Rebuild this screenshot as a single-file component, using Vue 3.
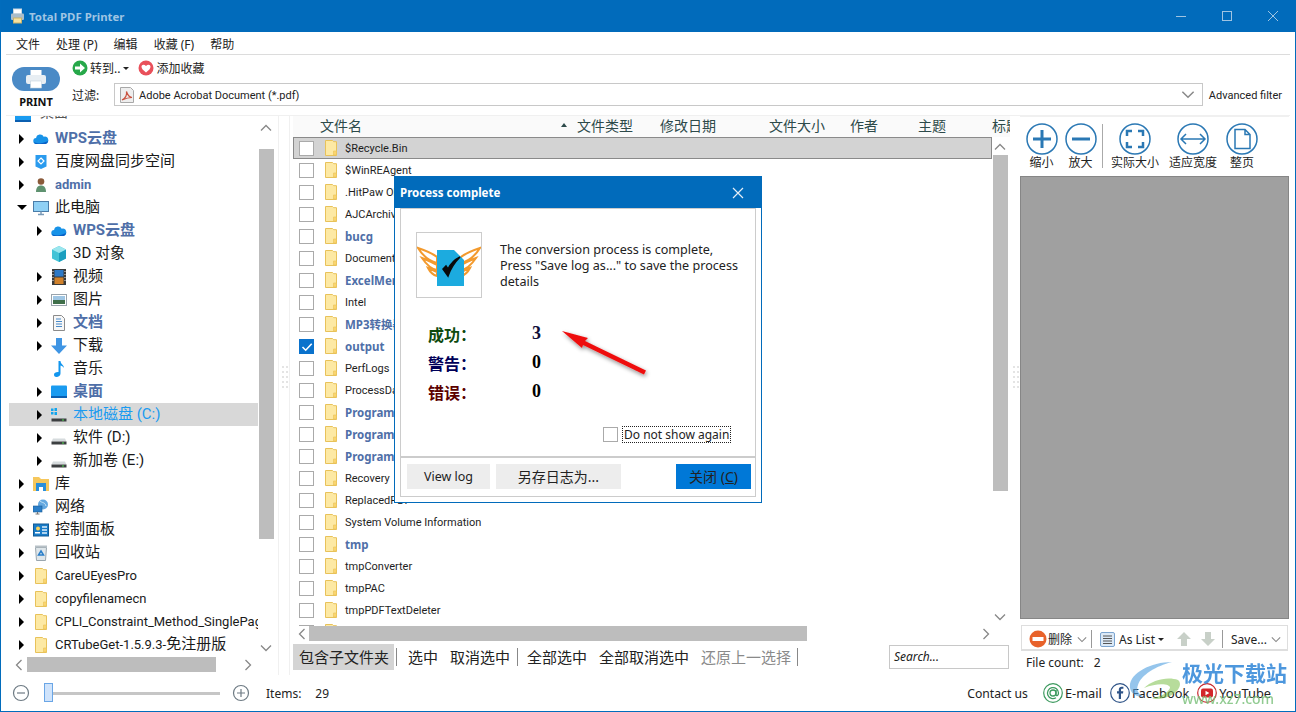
<script setup>
const menus = ['文件', '处理 (P)', '编辑', '收藏 (F)', '帮助']

const treeRows = [
  { text: 'WPS云盘', icon: 'cloud', lvl: 0, arrow: 'r', cls: 'special' },
  { text: '百度网盘同步空间', icon: 'baidu', lvl: 0, arrow: 'r' },
  { text: 'admin', icon: 'user', lvl: 0, arrow: 'r', cls: 'special' },
  { text: '此电脑', icon: 'pc', lvl: 0, arrow: 'd' },
  { text: 'WPS云盘', icon: 'cloud', lvl: 1, arrow: 'r', cls: 'special' },
  { text: '3D 对象', icon: 'cube', lvl: 1 },
  { text: '视频', icon: 'film', lvl: 1, arrow: 'r' },
  { text: '图片', icon: 'pic', lvl: 1, arrow: 'r' },
  { text: '文档', icon: 'doc', lvl: 1, arrow: 'r', cls: 'special' },
  { text: '下载', icon: 'down', lvl: 1, arrow: 'r' },
  { text: '音乐', icon: 'note', lvl: 1 },
  { text: '桌面', icon: 'desk', lvl: 1, arrow: 'r', cls: 'special' },
  { text: '本地磁盘 (C:)', icon: 'sysdrive', lvl: 1, arrow: 'r', cls: 'active' },
  { text: '软件 (D:)', icon: 'drive', lvl: 1, arrow: 'r' },
  { text: '新加卷 (E:)', icon: 'drive', lvl: 1, arrow: 'r' },
  { text: '库', icon: 'lib', lvl: 0, arrow: 'r' },
  { text: '网络', icon: 'net', lvl: 0, arrow: 'r' },
  { text: '控制面板', icon: 'panel', lvl: 0, arrow: 'r' },
  { text: '回收站', icon: 'bin', lvl: 0, arrow: 'r' },
  { text: 'CareUEyesPro', icon: 'folder', lvl: 0, arrow: 'r' },
  { text: 'copyfilenamecn', icon: 'folder', lvl: 0, arrow: 'r' },
  { text: 'CPLI_Constraint_Method_SinglePage', icon: 'folder', lvl: 0, arrow: 'r' },
  { text: 'CRTubeGet-1.5.9.3-', tail: '免注册版', icon: 'folder', lvl: 0, arrow: 'r' },
]

const isCjk = (text) => /[^\x00-\x7f]/.test(text)

const columns = [
  { text: '文件类型', width: 83 },
  { text: '修改日期', width: 109 },
  { text: '文件大小', width: 81 },
  { text: '作者', width: 68 },
  { text: '主题', width: 74 },
  { text: '标题', width: 40 },
]

const files = [
  { name: '$Recycle.Bin', cur: true },
  { name: '$WinREAgent' },
  { name: '.HitPaw Object' },
  { name: 'AJCArchive' },
  { name: 'bucg', bold: true },
  { name: 'Documents' },
  { name: 'ExcelMerge', bold: true },
  { name: 'Intel' },
  { name: 'MP3转换器', bold: true },
  { name: 'output', bold: true, checked: true },
  { name: 'PerfLogs' },
  { name: 'ProcessData' },
  { name: 'Program Files', bold: true },
  { name: 'Program Files (x86)', bold: true },
  { name: 'ProgramData', bold: true },
  { name: 'Recovery' },
  { name: 'ReplacedPDF' },
  { name: 'System Volume Information' },
  { name: 'tmp', bold: true },
  { name: 'tmpConverter' },
  { name: 'tmpPAC' },
  { name: 'tmpPDFTextDeleter' },
  { name: 'Users' },
]

const stats = [
  { label: '成功：', value: 3, cls: 'ok' },
  { label: '警告：', value: 0, cls: 'warn' },
  { label: '错误：', value: 0, cls: 'err' },
]
</script>

<template>
  <div class="win">
    <svg class="sprite" width="0" height="0">
      <symbol id="i-folder" viewBox="0 0 16 16">
        <path d="M2.500 .5h7l1.200 1.200h2.800v13.800h-11z" fill="#fde9a4" stroke="#e8c25a" />
        <path d="M10.500 15V11h3v4z" fill="#fbd56e" stroke="#e8c25a" stroke-width=".6" />
      </symbol>
      <symbol id="i-cloud" viewBox="0 0 16 16">
        <path d="M3.500 13a3 3 0 0 1-.4-6 4 4 0 0 1 7.600-1.200A3.600 3.600 0 0 1 12.500 13z" fill="#1893e8" />
        <path d="M1 11c3 2 8 2 14-1-.5 2-1.500 3-3 3H3.500C2.500 13 1.500 12.500 1 11z" fill="#0a5fc4" />
      </symbol>
      <symbol id="i-baidu" viewBox="0 0 16 16">
        <path d="M2.500 1h11v11.500L8 15l-5.500-2.500z" fill="#2a9bee" />
        <path d="M8 4l3 3-3 3-3-3z" fill="none" stroke="#fff" stroke-width="1.200" />
      </symbol>
      <symbol id="i-user" viewBox="0 0 16 16">
        <circle cx="8" cy="4.500" r="3.300" fill="#8a5a3a" />
        <path d="M3 15c0-4.500 2-6.500 5-6.500s5 2 5 6.500z" fill="#5f9270" />
      </symbol>
      <symbol id="i-pc" viewBox="0 0 16 16">
        <rect x=".5" y="1.500" width="15" height="10" fill="#8fd0f5" stroke="#4a7ca8" />
        <path d="M5 14.500h6M8 11.500v3" stroke="#7a9ab8" stroke-width="1.500" />
      </symbol>
      <symbol id="i-cube" viewBox="0 0 16 16">
        <path d="M8 0l7 3.500v9L8 16l-7-3.500v-9z" fill="#43c3d6" />
        <path d="M8 7l7-3.500v9L8 16z" fill="#1b9fbf" />
        <path d="M8 0l7 3.500L8 7 1 3.500z" fill="#9be6ee" />
      </symbol>
      <symbol id="i-film" viewBox="0 0 16 16">
        <rect x="1" y="0" width="14" height="16" fill="#3a3a3a" />
        <rect x="3.500" y="1" width="9" height="6.500" fill="#2d79c7" />
        <rect x="3.500" y="8.500" width="9" height="6.500" fill="#d0812b" />
        <path d="M2 2v1M2 5v1M2 8v1M2 11v1M14 2v1M14 5v1M14 8v1M14 11v1" stroke="#eee" />
      </symbol>
      <symbol id="i-pic" viewBox="0 0 16 16">
        <rect x=".5" y="2.500" width="15" height="11" fill="#fff" stroke="#99a4ad" />
        <rect x="2" y="4" width="12" height="4" fill="#9fc6e4" />
        <rect x="2" y="8" width="12" height="4" fill="#3f6f4a" />
      </symbol>
      <symbol id="i-doc" viewBox="0 0 16 16">
        <path d="M2.500 .5h8l3 3v12h-11z" fill="#f7f7f7" stroke="#8b8b8b" />
        <path d="M5 4h5M5 6.500h6M5 9h6M5 11.500h6" stroke="#4a8bc9" />
      </symbol>
      <symbol id="i-down" viewBox="0 0 16 16">
        <path d="M5 0h6v7.500h5L8 16 0 7.500h5z" fill="#3f95e4" />
      </symbol>
      <symbol id="i-note" viewBox="0 0 16 16">
        <path d="M7.500 0h2c0 3 3.500 4 3.500 7-1-1.500-2.500-2.300-3.500-2.500V12.500C9.500 14.500 7.500 16 5.500 16S3 14.800 3 13.500 4.800 10.800 7.500 11z" fill="#1296ee" />
      </symbol>
      <symbol id="i-desk" viewBox="0 0 16 16">
        <rect x="0" y="1.500" width="16" height="12" rx="1" fill="#1a9bf0" />
        <rect x="0" y="12" width="16" height="2" fill="#0b5fb0" />
      </symbol>
      <symbol id="i-drive" viewBox="0 0 16 16">
        <path d="M2 8.500h12l1.500 3H.5z" fill="#d6dbdd" />
        <rect x=".5" y="11.500" width="15" height="3" fill="#3c3f41" />
        <rect x="11" y="12.500" width="2" height="1" fill="#4fe04f" />
      </symbol>
      <symbol id="i-sysdrive" viewBox="0 0 16 16">
        <path d="M2 8.500h12l1.500 3H.5z" fill="#d6dbdd" />
        <rect x=".5" y="11.500" width="15" height="3" fill="#3c3f41" />
        <rect x="11" y="12.500" width="2" height="1" fill="#4fe04f" />
        <path d="M0 1.500h2.500v2.500H0zM3.500 1h2.500v3H3.500zM0 5h2.500v2.500H0zM3.500 5H6v3H3.500z" fill="#12a5ee" />
      </symbol>
      <symbol id="i-lib" viewBox="0 0 16 16">
        <path d="M0 1h6l2 2h8v12H0z" fill="#f6c75c" />
        <rect x="3" y="7" width="10" height="8" fill="#2a8fdc" />
        <rect x="6" y="11" width="4" height="4" fill="#fff" />
      </symbol>
      <symbol id="i-net" viewBox="0 0 16 16">
        <circle cx="10" cy="5.500" r="5" fill="#64a8e0" />
        <path d="M7 2c2 2 5 1 6 5" stroke="#c8e6f6" fill="none" />
        <rect x="0" y="7" width="9" height="6" fill="#2b7fc9" stroke="#1a5a94" stroke-width=".6" />
        <path d="M2.500 15h4M4.500 13v2" stroke="#777" />
      </symbol>
      <symbol id="i-panel" viewBox="0 0 16 16">
        <rect x=".5" y="2" width="15" height="12" fill="#1a7cc8" stroke="#115b96" />
        <circle cx="5" cy="6.500" r="2" fill="#fad35c" />
        <rect x="2" y="10" width="5" height="1.500" fill="#fff" />
        <path d="M9 5h5M9 8h5M9 11h5" stroke="#dff0fb" stroke-width="1.300" />
      </symbol>
      <symbol id="i-bin" viewBox="0 0 16 16">
        <path d="M2.500 2.500h11L12.500 15.500h-9z" fill="#dfe6ea" stroke="#9aa6ae" />
        <path d="M2 1.500h12" stroke="#b7c0c6" stroke-width="2" />
        <path d="M8 6l2.500 4h-5z" fill="none" stroke="#2b7fc9" stroke-width="1.500" />
      </symbol>
      <symbol id="i-up" viewBox="0 0 12 8"><path d="M1 6.500l5-5 5 5" fill="none" stroke="#888" stroke-width="1.300" /></symbol>
      <symbol id="i-dn" viewBox="0 0 12 8"><path d="M1 1.500l5 5 5-5" fill="none" stroke="#888" stroke-width="1.300" /></symbol>
      <symbol id="i-lt" viewBox="0 0 8 12"><path d="M6.500 1l-5 5 5 5" fill="none" stroke="#888" stroke-width="1.300" /></symbol>
      <symbol id="i-rt" viewBox="0 0 8 12"><path d="M1.500 1l5 5-5 5" fill="none" stroke="#888" stroke-width="1.300" /></symbol>
    </svg>

    <header class="titlebar">
      <svg class="app-icon" width="15" height="16" viewBox="0 0 15 16">
        <rect x="3.500" y="1" width="8" height="5" fill="#fff" stroke="#c9d6df" />
        <rect x="1" y="5.500" width="13" height="6.500" rx="1" fill="#a9bdcb" />
        <rect x="3.500" y="10" width="8" height="5" fill="#f6e2a0" stroke="#c9b36a" />
      </svg>
      <span class="app-title">Total PDF Printer</span>
      <div class="win-btns">
        <svg width="46" height="32" viewBox="0 0 46 32"><path d="M18 16.500h10" stroke="#9fc4e2" /></svg>
        <svg width="46" height="32" viewBox="0 0 46 32"><rect x="18.500" y="11.500" width="9" height="9" fill="none" stroke="#9fc4e2" /></svg>
        <svg width="46" height="32" viewBox="0 0 46 32"><path d="M18 11l10 10M28 11L18 21" stroke="#9fc4e2" /></svg>
      </div>
    </header>

    <div class="body">
      <nav class="menubar">
        <span v-for="m in menus" :key="m" class="menu-item">{{ m }}</span>
      </nav>

      <section class="toolbar">
        <div class="print">
          <div class="print-pill">
            <svg width="24" height="20" viewBox="0 0 24 20">
              <rect x="6.500" y="1" width="11" height="6" fill="#fff" />
              <rect x="2" y="6" width="20" height="9" rx="2" fill="#e8eef3" />
              <rect x="6.500" y="12" width="11" height="7" fill="#fff" stroke="#c4d2dd" stroke-width=".6" />
            </svg>
          </div>
          <b class="print-text">PRINT</b>
        </div>
        <div class="tool-main">
          <div class="quick">
            <svg width="16" height="16" viewBox="0 0 16 16">
              <circle cx="8" cy="8" r="7.500" fill="#27a84a" />
              <path d="M3 6.500h5V3.500L13 8l-5 4.500v-3H3z" fill="#fff" />
            </svg>
            <span class="quick-t quick-go">转到..</span>
            <i class="caret"></i>
            <svg class="heart" width="16" height="16" viewBox="0 0 16 16">
              <circle cx="8" cy="8" r="7.500" fill="#e9505a" />
              <path d="M8 12.500C5 10 3.500 8.500 3.500 6.700 3.500 5 5.800 3.800 8 6c2.200-2.200 4.500-1 4.500.7 0 1.800-1.500 3.300-4.500 5.800z" fill="#fff" />
            </svg>
            <span class="quick-t">添加收藏</span>
          </div>
          <div class="filter">
            <span class="filter-label">过滤:</span>
            <div class="combo">
              <svg width="16" height="16" viewBox="0 0 16 16">
                <path d="M1.500 .5h10l3 3v12h-13z" fill="#eee" stroke="#a8a8a8" />
                <path d="M3 13c3-1.500 5-5 4.500-8.500C8.500 8 10 10 13 10.500 9.500 10.500 6.500 11.500 3 13z" fill="none" stroke="#c9523f" stroke-width="1.200" />
              </svg>
              <span class="combo-t">Adobe Acrobat Document (*.pdf)</span>
              <svg class="combo-ch" width="14" height="9"><use href="#i-dn" /></svg>
            </div>
            <span class="adv">Advanced filter</span>
          </div>
        </div>
      </section>

      <main class="panes">
        <aside class="tree-pane">
          <div class="tree-top">
            <div class="tree-rows">
              <div class="row clip-row">
                <svg class="ticon" width="16" height="16"><use href="#i-desk" /></svg>
                <span class="row-t">桌面</span>
              </div>
              <div
                v-for="(r, i) in treeRows"
                :key="i"
                :class="['row', 'lvl' + r.lvl, r.cls, { cjk: isCjk(r.text) }]"
              >
                <i v-if="r.arrow" :class="['tri', 'tri-' + r.arrow]"></i>
                <i v-else class="tri-none"></i>
                <svg class="ticon" width="16" height="16"><use :href="'#i-' + r.icon" /></svg>
                <span class="row-t">{{ r.text }}<span v-if="r.tail" class="row-tail">{{ r.tail }}</span></span>
              </div>
            </div>
            <div class="vs vs-tree">
              <svg class="ch-v" width="12" height="8"><use href="#i-up" /></svg>
              <div class="thumb-v"></div>
              <svg class="ch-v ch-end" width="12" height="8"><use href="#i-dn" /></svg>
            </div>
          </div>
          <div class="hs hs-tree">
            <svg width="8" height="12"><use href="#i-lt" /></svg>
            <div class="thumb-h"></div>
            <svg class="ch-end-h" width="8" height="12"><use href="#i-rt" /></svg>
          </div>
        </aside>

        <div class="split"><i v-for="n in 5" :key="n"></i></div>

        <section class="list-pane">
          <div class="list-head">
            <span class="col-name">文件名<i class="sort"></i></span>
            <span
              v-for="c in columns"
              :key="c.text"
              class="col"
              :style="{ width: c.width + 'px' }"
            >{{ c.text }}</span>
          </div>
          <div class="list-top">
            <div class="list-body">
              <div v-for="f in files" :key="f.name" :class="['frow', { cur: f.cur }]">
                <span :class="['check', { on: f.checked }]">
                  <svg v-if="f.checked" width="14" height="14" viewBox="0 0 14 14">
                    <path d="M2.500 7l3.200 3.200 6-6.500" fill="none" stroke="#fff" stroke-width="1.600" />
                  </svg>
                </span>
                <svg class="ficon" width="16" height="16"><use href="#i-folder" /></svg>
                <span :class="['fname', { bold: f.bold }]">{{ f.name }}</span>
              </div>
            </div>
            <div class="vs vs-list">
              <svg class="ch-v" width="12" height="8"><use href="#i-up" /></svg>
              <div class="thumb-v"></div>
              <svg class="ch-v ch-end" width="12" height="8"><use href="#i-dn" /></svg>
            </div>
          </div>
          <div class="hs hs-list">
            <svg width="8" height="12"><use href="#i-lt" /></svg>
            <div class="thumb-h"></div>
            <svg class="ch-end-h" width="8" height="12"><use href="#i-rt" /></svg>
          </div>
          <div class="actions">
            <span class="act pressed">包含子文件夹</span>
            <i class="act-sep"></i>
            <span class="act">选中</span>
            <span class="act near">取消选中</span>
            <i class="act-sep"></i>
            <span class="act">全部选中</span>
            <span class="act">全部取消选中</span>
            <span class="act off near">还原上一选择</span>
            <i class="act-sep"></i>
            <span class="search">Search...</span>
          </div>
        </section>

        <div class="split split-r"><i v-for="n in 5" :key="n"></i></div>

        <aside class="preview">
          <div class="zoombar">
            <div class="zb zb-a">
              <svg width="34" height="34" viewBox="0 0 34 34">
                <circle cx="17" cy="17" r="15" fill="none" stroke="#2a78b4" stroke-width="1.500" />
                <path d="M17 8v18M8 17h18" stroke="#2a78b4" stroke-width="3" />
              </svg>
              <span>缩小</span>
            </div>
            <div class="zb zb-a">
              <svg width="34" height="34" viewBox="0 0 34 34">
                <circle cx="17" cy="17" r="15" fill="none" stroke="#2a78b4" stroke-width="1.500" />
                <path d="M8 17h18" stroke="#2a78b4" stroke-width="3" />
              </svg>
              <span>放大</span>
            </div>
            <i class="zb-sep"></i>
            <div class="zb zb-b">
              <svg width="34" height="34" viewBox="0 0 34 34">
                <circle cx="17" cy="17" r="15" fill="none" stroke="#2a78b4" stroke-width="1.500" />
                <path d="M9 14V9h5M20 9h5v5M25 20v5h-5M14 25H9v-5" fill="none" stroke="#2a78b4" stroke-width="2.500" />
              </svg>
              <span>实际大小</span>
            </div>
            <div class="zb zb-b">
              <svg width="34" height="34" viewBox="0 0 34 34">
                <circle cx="17" cy="17" r="15" fill="none" stroke="#2a78b4" stroke-width="1.500" />
                <path d="M5 17h24M10 12l-5 5 5 5M24 12l5 5-5 5" fill="none" stroke="#2a78b4" stroke-width="1.500" />
              </svg>
              <span>适应宽度</span>
            </div>
            <div class="zb zb-c">
              <svg width="34" height="34" viewBox="0 0 34 34">
                <circle cx="17" cy="17" r="15" fill="none" stroke="#2a78b4" stroke-width="1.500" />
                <path d="M10 7.500h10l5 5v14H10zM20 7.500v5h5" fill="none" stroke="#2a78b4" stroke-width="1.500" />
              </svg>
              <span>整页</span>
            </div>
          </div>
          <div class="page-view"></div>
          <div class="page-tools">
            <svg width="18" height="18" viewBox="0 0 18 18">
              <circle cx="9" cy="9" r="8.500" fill="#e8622a" />
              <rect x="3.500" y="7" width="11" height="4" fill="#fff" />
            </svg>
            <span class="pt-t">删除</span>
            <svg class="pt-ch" width="10" height="7"><use href="#i-dn" /></svg>
            <i class="pt-sep"></i>
            <svg width="15" height="15" viewBox="0 0 15 15">
              <rect x=".5" y=".5" width="14" height="14" rx="1.500" fill="#dbe9f7" stroke="#7ba4d0" />
              <path d="M3 4h9M3 6.500h9M3 9h9M3 11.500h9" stroke="#555" />
            </svg>
            <span class="pt-t pt-list">As List</span>
            <i class="caret"></i>
            <svg class="pt-up" width="16" height="16" viewBox="0 0 16 16"><path d="M8 1l7 7h-4v7H5V8H1z" fill="#c8d0c8" /></svg>
            <svg class="pt-dn" width="16" height="16" viewBox="0 0 16 16"><path d="M8 15l7-7h-4V1H5v7H1z" fill="#c8d0c8" /></svg>
            <i class="pt-sep pt-sep2"></i>
            <span class="pt-t">Save...</span>
            <svg class="pt-ch pt-end" width="10" height="7"><use href="#i-dn" /></svg>
          </div>
          <div class="file-count"><span>File count:</span><span>2</span></div>
        </aside>
      </main>

      <footer class="status">
        <svg width="18" height="18" viewBox="0 0 18 18">
          <circle cx="9" cy="9" r="7.500" fill="none" stroke="#6e7b84" stroke-width="1.200" />
          <path d="M5 9h8" stroke="#6e7b84" stroke-width="1.200" />
        </svg>
        <div class="slider"><i class="knob"></i></div>
        <svg width="18" height="18" viewBox="0 0 18 18">
          <circle cx="9" cy="9" r="7.500" fill="none" stroke="#6e7b84" stroke-width="1.200" />
          <path d="M5 9h8M9 5v8" stroke="#6e7b84" stroke-width="1.200" />
        </svg>
        <span class="items">Items:</span>
        <span class="items-n">29</span>
        <span class="contact">Contact us</span>
        <svg class="soc" width="20" height="20" viewBox="0 0 20 20">
          <circle cx="10" cy="10" r="9.300" fill="#fff" stroke="#3d9a5f" stroke-width="1.200" />
          <circle cx="10" cy="10" r="3" fill="none" stroke="#3d9a5f" stroke-width="1.300" />
          <path d="M13 7v4.500c0 2 2.500 1.500 2.500-1.500a5.500 5.500 0 1 0-2.500 4.700" fill="none" stroke="#3d9a5f" stroke-width="1.300" />
        </svg>
        <span class="soc-t">E-mail</span>
        <svg class="soc" width="20" height="20" viewBox="0 0 20 20">
          <circle cx="10" cy="10" r="9.300" fill="#fff" stroke="#2f5488" stroke-width="1.200" />
          <path d="M11 16V10.500h2l.3-2.300H11V7c0-.8.3-1.200 1.200-1.200h1.200V3.800C12.800 3.700 12.300 3.700 11.800 3.700 10 3.700 8.800 4.800 8.800 6.800v1.400H7v2.300h1.800V16z" fill="#2f5488" />
        </svg>
        <span class="soc-t">Facebook</span>
        <svg class="soc" width="20" height="20" viewBox="0 0 20 20">
          <circle cx="10" cy="10" r="9.300" fill="#fff" stroke="#c8282d" stroke-width="1.200" />
          <rect x="4" y="5.500" width="12" height="9" rx="2" fill="#d3262b" />
          <path d="M8.500 7.800v4.400l3.800-2.200z" fill="#fff" />
        </svg>
        <span class="soc-t">YouTube</span>
      </footer>
    </div>

    <div class="dialog">
      <div class="dlg-title">
        <span>Process complete</span>
        <svg width="12" height="12" viewBox="0 0 12 12"><path d="M1 1l10 10M11 1L1 11" stroke="#e4eef7" stroke-width="1.200" /></svg>
      </div>
      <div class="dlg-inner">
        <div class="dlg-content">
          <div class="dlg-msg">
            <div class="dlg-logo">
              <svg width="64" height="64" viewBox="0 0 64 64">
                <path d="M1 15c6 2 14 5 19 9v6c-8-2-14-7-19-15zM5 25c5 2 10 4 15 7v5c-6-1-11-6-15-12zM11 35l9 4v4c-4-1-7-4-9-8z" fill="#fff" stroke="#f39a2d" stroke-width="2" />
                <path d="M63 15c-6 2-14 5-19 9v6c8-2 14-7 19-15zM59 25c-5 2-10 4-15 7v5c6-1 11-6 15-12zM53 35l-9 4v4c4-1 7-4 9-8z" fill="#fff" stroke="#f39a2d" stroke-width="2" />
                <path d="M20 17h17l10 10v26H20z" fill="#1cabdf" />
                <path d="M26 36l5 7c3-9 7-14 12-19-6 3-10 8-12 12l-2-3z" fill="#0a0a0a" stroke="#0a0a0a" stroke-width="1.500" />
              </svg>
            </div>
            <p class="dlg-text">The conversion process is complete,<br />Press "Save log as..." to save the process<br />details</p>
          </div>
          <div v-for="s in stats" :key="s.label" :class="['stat', s.cls]">
            <span class="stat-l">{{ s.label }}</span>
            <span class="stat-v">{{ s.value }}</span>
          </div>
          <div class="again">
            <span class="check"></span>
            <span class="again-t">Do not show again</span>
          </div>
        </div>
        <div class="dlg-btns">
          <span class="btn btn-log">View log</span>
          <span class="btn btn-save">另存日志为...</span>
          <span class="btn btn-close">关闭 (<u>C</u>)</span>
        </div>
      </div>
    </div>

    <svg class="red-arrow" width="110" height="70" viewBox="0 0 110 70">
      <defs>
        <filter id="arrow-shadow" x="-20%" y="-20%" width="150%" height="160%">
          <feDropShadow dx="1" dy="2" stdDeviation="2" flood-color="#000" flood-opacity=".45" />
        </filter>
      </defs>
      <path d="M5 5L31 12 28 15 89 44.500 87 48.500 26 19 25 22z" fill="#ee1111" filter="url(#arrow-shadow)" />
    </svg>

    <div class="watermark">
      <svg width="58" height="46" viewBox="0 0 58 46">
        <path d="M46 2C24 2 2 14 4 28c1 6 7 9 14 9-6-3-8-7-6-12C15 15 30 6 46 2z" fill="#4f9fe0" opacity=".7" />
        <path d="M18 28c8-8 24-12 34-8 4 3 2 10-6 15-8 4-16 5-20 3 8-1 16-5 18-10 1-4-12-6-26 0z" fill="#7cc04a" opacity=".65" />
      </svg>
      <div class="wm-text">
        <span class="wm-cn">极光下载站</span>
        <span class="wm-en">www.xz7.com</span>
      </div>
    </div>
  </div>
</template>

<style>
html, body { margin: 0; overflow: hidden; }
</style>

<style scoped>
.win {
  position: relative;
  width: 1296px;
  height: 712px;
  display: flex;
  flex-direction: column;
  background: #fff;
  color: #1a1a1a;
  font: 12px "Noto Sans", "Noto Sans CJK SC", sans-serif;
  overflow: hidden;
  box-sizing: border-box;
  border: 1px solid #016cbc;
  border-top: 0;
}
.sprite { position: absolute; }
svg { flex: none; display: block; }
i { font-style: normal; }

/* TITLE */
.titlebar {
  height: 32px;
  margin: 0 -1px;
  background: #016bbb;
  display: flex;
  align-items: center;
  padding-left: 10px;
  flex: none;
}
.app-title { margin-left: 4px; color: #9fc5e3; font-weight: 700; font-size: 11.400px; }
.win-btns { margin-left: auto; display: flex; }

.body { flex: 1; display: flex; flex-direction: column; min-height: 0; }

/* MENU */
.menubar {
  margin: 0 5px;
  border-bottom: 1px solid #dcdcdc;
  display: flex;
  align-items: center;
  flex: none;
  padding: 2px 0 0 10px;
  height: 20px;
}
.menu-item { margin-right: 16px; color: #222; }

/* TOOLBAR */
.toolbar { height: 61px; display: flex; flex: none; margin: 0 5px; border-bottom: 1px solid #f0f0f0; box-sizing: border-box; }
.print { width: 48px; margin-left: 6px; padding-top: 12px; display: flex; flex-direction: column; align-items: center; }
.print-pill { width: 48px; height: 24px; border-radius: 12px; background: #4a8ac6; display: flex; justify-content: center; align-items: center; }
.print-text { margin-top: 3px; font-size: 11px; font-weight: 700; color: #111; line-height: 15px; }
.tool-main { flex: 1; margin-left: 12px; display: flex; flex-direction: column; }
.quick { display: flex; align-items: center; height: 22px; margin-top: 2px; }
.quick-t { margin-left: 2px; color: #222; }
.quick-go { margin-left: 2px; }
.caret { display: block; width: 0; height: 0; border: 3px solid transparent; border-top-color: #222; border-bottom: 0; margin-left: 3px; flex: none; }
.heart { margin-left: 9px; }
.filter { display: flex; align-items: center; margin-top: 4px; height: 23px; }
.filter-label { width: 42px; color: #222; padding-top: 1px; }
.combo { flex: 1; height: 23px; box-sizing: border-box; border: 1px solid #c8c8c8; display: flex; align-items: center; padding: 0 7px 0 4px; }
.combo-t { margin-left: 4px; padding-top: 1px; font: 11px Roboto, sans-serif; color: #222; }
.combo-ch { margin-left: auto; }
.adv { margin: 0 8px 0 6px; padding-top: 1px; font: 11px Roboto, sans-serif; color: #222; }

/* PANES */
.panes { flex: 1; min-height: 0; display: flex; }
.tree-pane { width: 278px; flex: none; display: flex; flex-direction: column; padding-bottom: 3px; box-sizing: border-box; border-right: 1px solid #f0f0f0; }
.tree-top { flex: 1; min-height: 0; display: flex; }
.tree-rows { flex: 1; min-width: 0; overflow: hidden; padding-left: 8px; }
.row { height: 23px; display: flex; align-items: center; white-space: nowrap; overflow: hidden; font: 13px Roboto, "Noto Sans CJK SC", sans-serif; color: #1a1a1a; }
.row.cjk { font-size: 15px; }
.row-tail { font-size: 15px; }
.clip-row { margin-top: -12px; padding-left: 6px; color: #555; }
.clip-row .row-t { margin-bottom: 6px; margin-left: 3px; font-size: 14px; }
.lvl0 { padding-left: 10px; }
.lvl1 { padding-left: 28px; }
.tri, .tri-none { display: block; width: 5px; height: 10px; flex: none; margin-right: 9px; }
.tri-r { width: 0; height: 0; border: 5px solid transparent; border-left: 5px solid #000; border-right: 0; }
.tri-d { width: 0; height: 0; border: 5px solid transparent; border-top: 5px solid #000; border-bottom: 0; margin-left: -2px; margin-right: 6px; }
.ticon { margin-right: 6px; }
.row-t { line-height: 21px; padding-bottom: 1px; }
.special .row-t { color: #4f6fa8; font-weight: 700; }
.active { background: #d8d8d8; }
.active .row-t { color: #1b9bf0; }

.vs { width: 16px; flex: none; display: flex; flex-direction: column; align-items: center; }
.vs-tree { margin-right: 4px; }
.vs-tree .ch-v { margin-top: 8px; }
.vs-tree .thumb-v { margin-top: 17px; height: 390px; }
.vs-list { margin-right: 2px; }
.vs-list .ch-v { margin-top: 6px; }
.vs-list .thumb-v { margin-top: 4px; height: 336px; }
.thumb-v { width: 15px; background: #bdbdbd; flex: none; }
.vs .ch-v.ch-end { margin-top: auto; margin-bottom: 5px; }
.hs { display: flex; align-items: center; flex: none; height: 15px; }
.thumb-h { height: 15px; background: #bdbdbd; flex: none; }
.ch-end-h { margin-left: auto; }
.hs-tree { padding: 0 26px 0 14px; }
.hs-tree .thumb-h { width: 189px; margin-left: 4px; }
.hs-list { padding: 0 20px 0 5px; }
.hs-list .thumb-h { width: 498px; margin-left: 3px; }

.split { width: 11px; flex: none; display: grid; grid-template-columns: 2px 2px; gap: 3px 1px; align-content: center; justify-content: center; padding-bottom: 38px; border-right: 1px solid #f0f0f0; box-sizing: border-box; }
.split i { display: block; width: 8px; height: 2px; background: repeating-linear-gradient(90deg, #e4e4e4 0 2px, transparent 2px 4px); grid-column: 1 / 3; }
.split-r { border-right: 0; width: 10px; }

/* LIST */
.list-pane { width: 720px; flex: none; display: flex; flex-direction: column; padding-left: 3px; box-sizing: border-box; }
.list-head { height: 21px; padding-bottom: 3px; box-sizing: border-box; flex: none; display: flex; align-items: center; color: #2d4a4a; font-size: 14px; background: #fafafa; white-space: nowrap; overflow: hidden; }
.col-name { width: 284px; flex: none; padding-left: 27px; box-sizing: border-box; position: relative; }
.sort { position: absolute; left: 268px; top: 8px; width: 0; height: 0; border: 3.500px solid transparent; border-bottom: 4px solid #2d4a4a; border-top: 0; }
.col { flex: none; }
.list-top { height: 489px; flex: none; display: flex; }
.list-body { flex: 1; min-width: 0; overflow: hidden; }
.frow { height: 22px; display: flex; align-items: center; padding-left: 6px; box-sizing: border-box; white-space: nowrap; font: 11px Roboto, "Noto Sans CJK SC", sans-serif; }
.frow.cur { background: #d3d3d3; border: 1px solid #8a8a8a; padding-left: 5px; }
.check { width: 15px; height: 15px; box-sizing: border-box; border: 1px solid #aaa; background: #fff; flex: none; display: block; }
.check.on { background: #0a72cc; border-color: #0a72cc; }
.ficon { margin-left: 9px; margin-right: 6px; }
.fname { color: #1e1e1e; }
.fname.bold { color: #4f6fa8; font: 700 11.500px "Noto Sans", "Noto Sans CJK SC", sans-serif; }

.actions { height: 26px; margin-top: 3px; flex: none; display: flex; align-items: center; font-size: 15px; color: #222; }
.act { margin-right: 12px; line-height: 26px; white-space: nowrap; }
.act.near { margin-right: 7px; }
.act.pressed { background: #d4d4d4; padding: 0 5px 0 6px; margin-right: 2px; }
.act.off { color: #8a8a8a; margin-right: 6px; }
.act-sep { width: 1px; height: 18px; background: #888; margin-right: 9px; flex: none; }
.act-sep:nth-child(2) { margin-right: 11px; }
.search { margin-left: auto; margin-right: 1px; width: 120px; height: 24px; box-sizing: border-box; border: 1px solid #c8c8c8; font-size: 12px; font-style: italic; line-height: 22px; padding-left: 4px; }

/* PREVIEW */
.preview { flex: 1; min-width: 0; display: flex; flex-direction: column; padding-right: 6px; }
.zoombar { height: 60px; flex: none; display: flex; padding-top: 5px; box-sizing: border-box; border-top: 1px solid #f0f0f0; }
.zb { display: flex; flex-direction: column; align-items: center; color: #222; white-space: nowrap; }
.zb span { line-height: 16px; margin-top: -1px; }
.zb-a { width: 39px; }
.zb-a:first-child { margin-left: 2px; }
.zb-b { width: 58px; }
.zb-c { width: 40px; }
.zb-sep { display: block; width: 1px; height: 44px; background: #aaa; margin: 2px 3px 0 2px; flex: none; }
.page-view { height: 443px; flex: none; background: #a0a0a0; border: 1px solid #868686; box-sizing: border-box; }
.page-tools { height: 26px; margin: 6px 1px 0; flex: none; box-sizing: border-box; border: 1px solid #dedede; border-bottom-width: 2px; display: flex; align-items: center; padding: 3px 0 0 7px; color: #222; white-space: nowrap; }
.pt-t { margin-left: 1px; flex: none; }
.pt-ch { margin-left: 5px; }
.pt-sep { display: block; width: 1px; height: 18px; background: #999; margin: 0 8px 0 4px; flex: none; }
.pt-list { margin-left: 4px; }
.pt-up { margin-left: 12px; }
.pt-dn { margin-left: 8px; }
.pt-sep2 { margin: 0 7px 0 6px; }
.pt-end { margin-left: auto; margin-right: 6px; }
.file-count { display: flex; gap: 10px; margin: 4px 0 0 6px; color: #222; line-height: 16px; }

/* STATUS */
.status { height: 36px; flex: none; display: flex; align-items: center; padding-left: 11px; color: #222; }
.slider { width: 176px; height: 3px; margin: 0 12px 0 14px; background: #c6c6c6; position: relative; }
.knob { position: absolute; left: 0; top: -9px; width: 9px; height: 19px; background: #cfe3fb; border: 1px solid #6aa6e6; box-sizing: border-box; }
.items { margin-left: 16px; }
.items-n { margin-left: 14px; }
.contact { margin-left: auto; margin-right: 15px; font-size: 12.200px; }
.soc { margin-right: 2px; }
.soc-t { color: #222; margin-right: 8px; font-size: 12.800px; }
.status .soc-t:last-child { margin-right: 24px; }

/* DIALOG */
.dialog {
  position: absolute;
  left: 393px;
  top: 176px;
  width: 368px;
  height: 327px;
  box-sizing: border-box;
  background: #fff;
  border: 1px solid #016bbb;
  display: flex;
  flex-direction: column;
}
.dlg-title { height: 31px; flex: none; margin: 0 -1px; background: #016bbb; display: flex; align-items: center; justify-content: space-between; padding: 0 18px 0 6px; color: #fff; font-weight: 700; font-size: 11.500px; }
.dlg-inner { flex: 1; margin: 0 5px 5px; border: 1px solid #ccc; border-top: 0; display: flex; flex-direction: column; }
.dlg-content { flex: 1; padding: 23px 15px 0; display: flex; flex-direction: column; border-top: 1px solid #ccc; border-bottom: 2px solid #ccc; }
.dlg-msg { display: flex; }
.dlg-logo { width: 66px; height: 66px; box-sizing: border-box; border: 1px solid #ccc; flex: none; display: flex; align-items: center; justify-content: center; }
.dlg-text { margin: 10px 0 0 18px; font-size: 12.600px; line-height: 16px; color: #222; white-space: nowrap; }
.stat { display: flex; height: 29px; align-items: center; font: 700 16px "Liberation Serif", "Noto Sans CJK SC", serif; margin-left: 12px; }
.stat-l { width: 104px; }
.stat-v { color: #000; font-size: 18px; }
.ok { margin-top: 21px; }
.ok .stat-l { color: #0e4a0e; }
.ok .stat-v { color: #10103a; }
.warn .stat-l { color: #000058; }
.err .stat-l { color: #5c0000; }
.again { margin-top: auto; margin-bottom: 13px; margin-left: 187px; display: flex; align-items: center; }
.again-t { margin-left: 4px; border: 1px dotted #222; font-size: 12px; line-height: 15px; padding: 0 1px; color: #222; white-space: nowrap; }
.dlg-btns { height: 37px; flex: none; display: flex; align-items: center; padding: 0 4px 1px 6px; }
.btn { height: 25px; line-height: 25px; text-align: center; background: #ededed; color: #222; }
.btn-log { width: 83px; margin-right: 6px; font-size: 12.500px; }
.btn-save { width: 125px; font-size: 14px; }
.btn-close { width: 75px; margin-left: auto; background: #0078d7; font-size: 14px; }

.red-arrow { position: absolute; left: 556px; top: 326px; }

.watermark { position: absolute; left: 1125px; top: 660px; display: flex; pointer-events: none; opacity: .85; }
.wm-text { display: flex; flex-direction: column; margin-left: -2px; }
.wm-cn { font-size: 21px; font-weight: 700; color: #2f86d8; line-height: 26px; }
.wm-en { font-size: 14px; font-weight: 500; color: #7ec27e; line-height: 20px; margin-top: 3px; }
</style>
